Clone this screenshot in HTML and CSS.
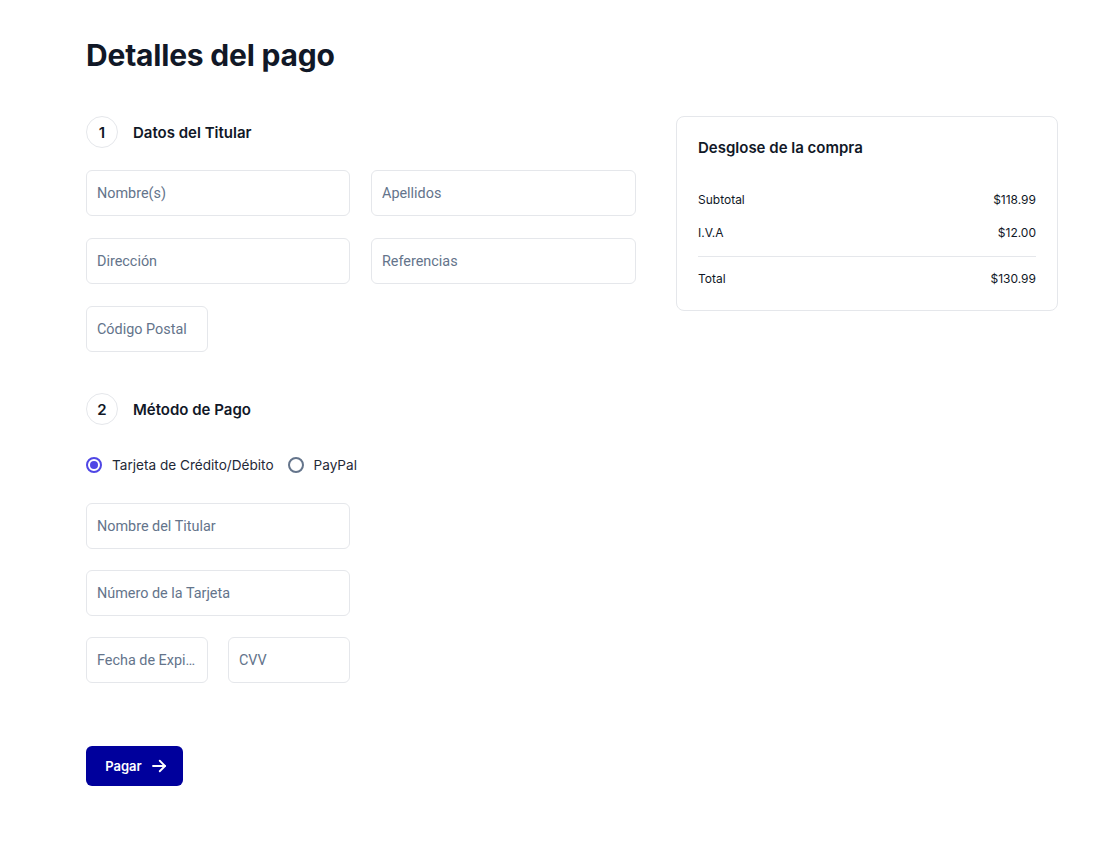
FILE: index.html
```html
<!DOCTYPE html>
<html lang="es">
<head>
<meta charset="utf-8">
<title>Detalles del pago</title>
<link rel="stylesheet" href="styles.css">
</head>
<body>
<main class="page">
  <h1 class="title">Detalles del pago</h1>
  <div class="layout">
    <div class="form-col">
      <section class="section">
        <div class="step"><span class="step-num">1</span><span class="step-label">Datos del Titular</span></div>
        <div class="grid">
          <input class="field" placeholder="Nombre(s)">
          <input class="field" placeholder="Apellidos">
          <input class="field" placeholder="Dirección">
          <input class="field" placeholder="Referencias">
          <div class="half-row"><input class="field" placeholder="Código Postal"></div>
        </div>
      </section>
      <section class="section section-2">
        <div class="step"><span class="step-num">2</span><span class="step-label">Método de Pago</span></div>
        <div class="radios">
          <label class="radio"><span class="dot checked"></span>Tarjeta de Crédito/Débito</label>
          <label class="radio"><span class="dot"></span>PayPal</label>
        </div>
        <div class="card-fields">
          <input class="field" placeholder="Nombre del Titular">
          <input class="field" placeholder="Número de la Tarjeta">
          <div class="half-row">
            <input class="field" placeholder="Fecha de Expiración">
            <input class="field" placeholder="CVV">
          </div>
        </div>
      </section>
      <button class="pay">Pagar
        <svg width="18" height="18" viewBox="0 0 24 24" fill="none" stroke="currentColor" stroke-width="2.4" stroke-linecap="round" stroke-linejoin="round"><path d="M4 12h16"/><path d="M13 5l7 7-7 7"/></svg>
      </button>
    </div>
    <aside class="summary">
      <h2 class="summary-title">Desglose de la compra</h2>
      <div class="rows">
        <div class="row"><span>Subtotal</span><span>$118.99</span></div>
        <div class="row"><span>I.V.A</span><span>$12.00</span></div>
      </div>
      <div class="row total"><span>Total</span><span>$130.99</span></div>
    </aside>
  </div>
</main>
</body>
</html>
```
FILE: styles.css
```css
* { box-sizing: border-box; }
body {
  margin: 0;
  background: #fff;
  font-family: Inter, "Noto Sans", sans-serif;
  color: #111827;
}
.page {
  padding: 36px 0 0 86px;
}
.title {
  margin: 0;
  font-size: 30px;
  font-weight: 700;
  line-height: 38px;
  color: #111827;
  letter-spacing: -0.2px;
}
.layout {
  display: flex;
  gap: 40px;
  margin-top: 42px;
  align-items: flex-start;
}
.form-col {
  width: 550px;
}
.step {
  display: flex;
  align-items: center;
  gap: 15px;
}
.step-num {
  width: 32px;
  height: 32px;
  border: 1px solid #e5e7eb;
  border-radius: 50%;
  display: flex;
  align-items: center;
  justify-content: center;
  font-size: 15px;
  font-weight: 600;
}
.step-label {
  font-size: 15px;
  font-weight: 600;
}
.grid {
  margin-top: 22px;
  display: grid;
  grid-template-columns: 264px 265px;
  column-gap: 21px;
  row-gap: 22px;
}
.field {
  height: 46px;
  width: 100%;
  border: 1px solid #e5e7eb;
  border-radius: 6px;
  padding: 0 10px;
  font-family: Roboto, sans-serif;
  font-size: 14.4px;
  color: #111827;
  background: #fff;
  outline: none;
  text-overflow: ellipsis;
}
.field::placeholder { color: #64748b; }
.half-row {
  display: grid;
  grid-template-columns: 122px 122px;
  column-gap: 20px;
}
.section-2 { margin-top: 41px; }
.radios {
  margin-top: 32px;
  display: flex;
  gap: 14px;
  align-items: center;
}
.radio {
  display: flex;
  align-items: center;
  gap: 10px;
  font-family: Inter, sans-serif;
  font-size: 13.6px;
  color: #1f2937;
}
.dot {
  width: 16px;
  height: 16px;
  border-radius: 50%;
  border: 2px solid #64748b;
  display: inline-block;
  position: relative;
}
.dot.checked {
  border: 2px solid #4f46e5;
}
.dot.checked::after {
  content: "";
  position: absolute;
  left: 2px; top: 2px;
  width: 8px; height: 8px;
  border-radius: 50%;
  background: #4f46e5;
}
.card-fields {
  margin-top: 30px;
  width: 264px;
  display: flex;
  flex-direction: column;
  gap: 21px;
}
.pay {
  margin-top: 63px;
  width: 97px;
  height: 40px;
  border: none;
  border-radius: 6px;
  background: #00009c;
  color: #fff;
  font-family: Inter, sans-serif;
  font-size: 13px;
  font-weight: 600;
  display: flex;
  align-items: center;
  justify-content: center;
  gap: 8px;
  padding: 0 0 0 4px;
}
.summary {
  width: 382px;
  border: 1px solid #e5e7eb;
  border-radius: 8px;
  padding: 21px 21px 24px 21px;
}
.summary-title {
  margin: 0;
  font-size: 15px;
  font-weight: 600;
  line-height: 20px;
}
.rows {
  margin-top: 34px;
  display: flex;
  flex-direction: column;
  gap: 18px;
  padding-bottom: 16px;
  border-bottom: 1px solid #e5e7eb;
}
.row {
  display: flex;
  justify-content: space-between;
  font-size: 12px;
  line-height: 15px;
  color: #111827;
}
.total { margin-top: 14px; }
```
